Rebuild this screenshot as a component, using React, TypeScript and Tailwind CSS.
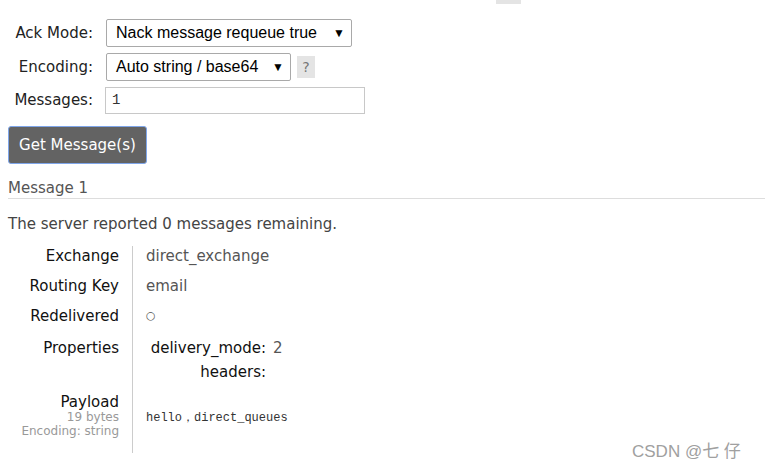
import React from 'react';

const sans = "font-['DejaVu_Sans',Verdana,sans-serif]";

function FakeSelect({ value, width }: { value: string; width: string }) {
  return (
    <div
      className={`${width} h-[28px] flex items-center justify-between pl-[9px] pr-[6px] border border-[#a9a9a9] rounded-[2px] bg-white text-black text-[16px] font-['Liberation_Sans',Arial,sans-serif]`}
    >
      <span>{value}</span>
      <span className="text-[12px] leading-none">▼</span>
    </div>
  );
}

function FormRow({ label, children }: { label: string; children: React.ReactNode }) {
  return (
    <div className="flex items-center">
      <div className="w-[94px] pr-[1px] text-right text-[15px] text-[#222]">{label}</div>
      <div className="ml-[12px] flex items-center gap-[6px]">{children}</div>
    </div>
  );
}

function InfoRow({
  label,
  children,
  sub,
}: {
  label: React.ReactNode;
  children: React.ReactNode;
  sub?: React.ReactNode;
}) {
  return (
    <div className="flex">
      <div className="w-[120px] pr-[1px] text-right text-[15px] text-[#111] leading-[20px]">
        {label}
        {sub}
      </div>
      <div className="w-[12px]" />
      <div className="border-l border-[#ccc] pl-[13px] text-[15px] text-[#555] leading-[20px] flex-1">
        {children}
      </div>
    </div>
  );
}

export default function App() {
  return (
    <div className={`w-[765px] h-[470px] overflow-hidden bg-white relative ${sans}`}>
      <div className="h-[4px] flex">
        <div className="ml-[496px] w-[25px] h-[4px] bg-[#e4e4e4]" />
      </div>

      <div className="pt-[15px] flex flex-col gap-[6px]">
        <FormRow label="Ack Mode:">
          <FakeSelect value="Nack message requeue true" width="w-[246px]" />
        </FormRow>
        <FormRow label="Encoding:">
          <FakeSelect value="Auto string / base64" width="w-[185px]" />
          <div className="w-[18px] h-[22px] bg-[#e4e4e4] text-[#777] text-[14px] flex items-center justify-center">
            ?
          </div>
        </FormRow>
        <FormRow label="Messages:">
          <div className="w-[260px] h-[27px] -ml-[1px] border border-[#c8c8c8] px-[6px] flex items-center text-[14px] text-[#333] font-['Liberation_Mono',monospace]">
            1
          </div>
        </FormRow>
      </div>

      <div className="pl-[8px] pt-[12px]">
        <button className="w-[139px] h-[38px] bg-[#636363] border border-[#7fa6ea] rounded-[3px] text-white text-[15px]">
          Get Message(s)
        </button>
      </div>

      <div className="ml-[8px] mt-[14px] pb-0 border-b border-[#ddd] text-[15px] leading-[20px] text-[#555]">
        Message 1
      </div>

      <div className="pl-[8px] mt-[14px] text-[15px] text-[#444]">
        The server reported 0 messages remaining.
      </div>

      <div className="mt-[10px] flex flex-col">
        <InfoRow label="Exchange">
          <div className="pb-[10px]">direct_exchange</div>
        </InfoRow>
        <InfoRow label="Routing Key">
          <div className="pb-[10px]">email</div>
        </InfoRow>
        <InfoRow label="Redelivered">
          <div className="pb-[12px] text-[11px]">○</div>
        </InfoRow>
        <InfoRow label="Properties">
          <div className="pb-[10px] flex flex-col gap-[4px]">
            <div className="flex">
              <div className="w-[120px] text-right text-[#111]">delivery_mode:</div>
              <div className="ml-[7px]">2</div>
            </div>
            <div className="flex">
              <div className="w-[120px] text-right text-[#111]">headers:</div>
            </div>
          </div>
        </InfoRow>
        <InfoRow
          label={<div className="pt-[2px] leading-[16px]">Payload</div>}
          sub={
            <div className="pb-[14px]">
              <div className="text-[12px] leading-[13px] text-[#999] pt-[1px]">19 bytes</div>
              <div className="text-[12px] leading-[15px] text-[#999]">Encoding: string</div>
            </div>
          }
        >
          <div className="pt-[16px] text-[12px] text-[#333] font-['Liberation_Mono',monospace]">
            hello，direct_queues
          </div>
        </InfoRow>
      </div>

      <div className="absolute left-[632px] top-[439px] text-[17px] text-[#a0a0a0] font-['Liberation_Sans','Noto_Sans_CJK_SC',sans-serif]">
        CSDN @七 仔
      </div>
    </div>
  );
}
